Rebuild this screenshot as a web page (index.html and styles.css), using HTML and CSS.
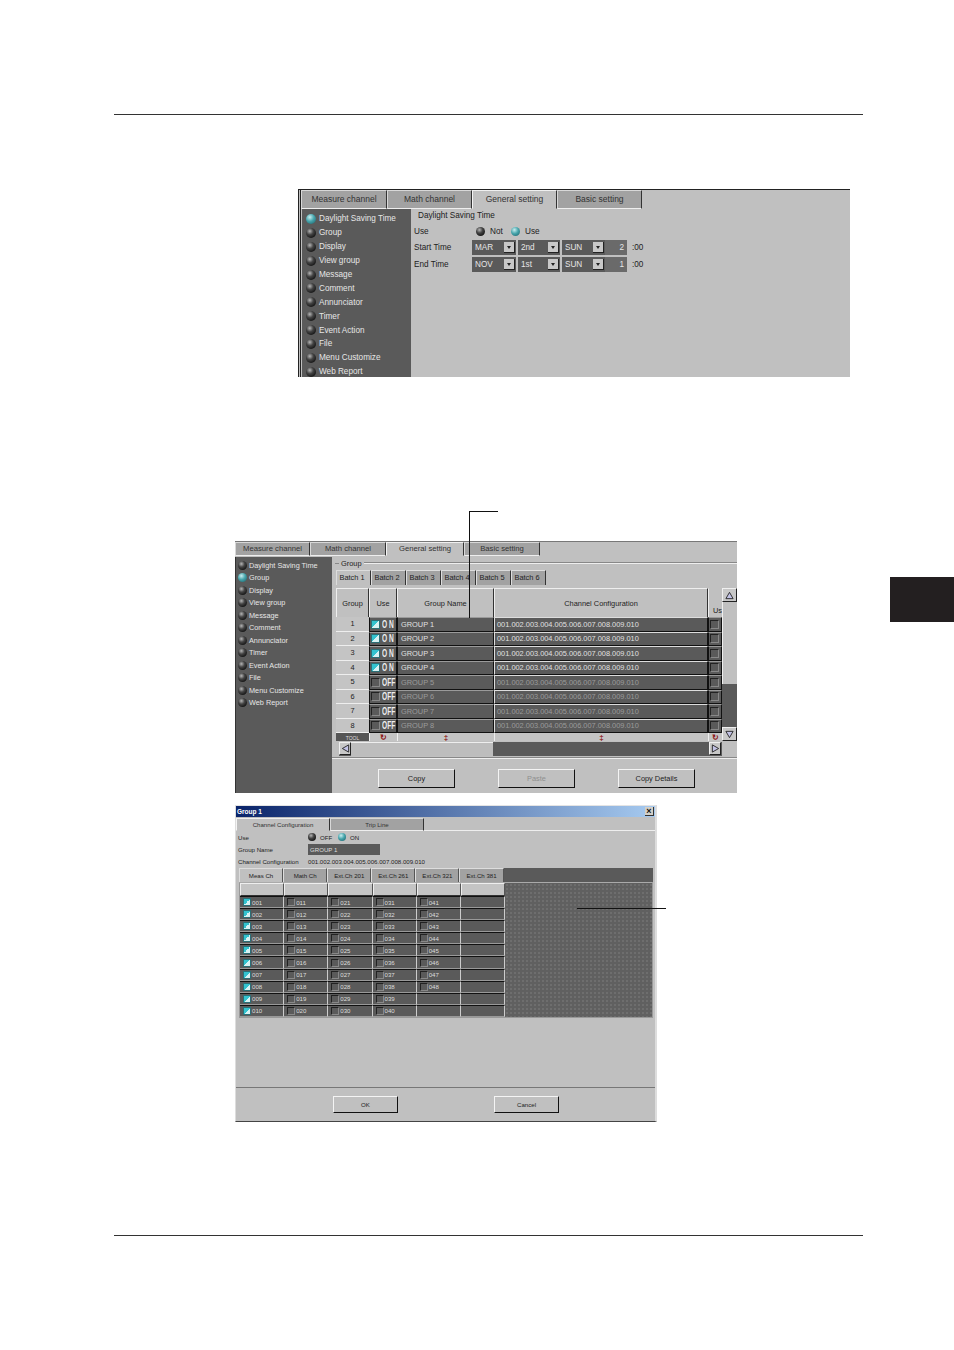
FILE: index.html
```html
<!DOCTYPE html>
<html lang="en">
<head>
<meta charset="utf-8">
<title>Group settings</title>
<link rel="stylesheet" href="styles.css">
</head>
<body>
<div class="page">
  <div class="rule"></div>

  <section class="fig1">
    <div class="tabs tabs-a">
      <div class="tab">Measure channel</div><div class="tab">Math channel</div><div class="tab active">General setting</div><div class="tab">Basic setting</div>
    </div>
    <div class="split">
      <ul class="side side-a">
        <li><i class="radio on"></i>Daylight Saving Time</li>
        <li><i class="radio"></i>Group</li>
        <li><i class="radio"></i>Display</li>
        <li><i class="radio"></i>View group</li>
        <li><i class="radio"></i>Message</li>
        <li><i class="radio"></i>Comment</li>
        <li><i class="radio"></i>Annunciator</li>
        <li><i class="radio"></i>Timer</li>
        <li><i class="radio"></i>Event Action</li>
        <li><i class="radio"></i>File</li>
        <li><i class="radio"></i>Menu Customize</li>
        <li><i class="radio"></i>Web Report</li>
      </ul>
      <div class="dst">
        <div class="dst-title">Daylight Saving Time</div>
        <div class="dst-row dst-use"><span class="dst-label">Use</span><i class="radio"></i><span class="opt">Not</span><i class="radio on"></i><span class="opt">Use</span></div>
        <div class="dst-row"><span class="dst-label">Start Time</span><span class="combo">MAR<b></b></span><span class="combo">2nd<b></b></span><span class="combo">SUN<b></b></span><span class="num">2</span><span class="zero">:00</span></div>
        <div class="dst-row"><span class="dst-label">End Time</span><span class="combo">NOV<b></b></span><span class="combo">1st<b></b></span><span class="combo">SUN<b></b></span><span class="num">1</span><span class="zero">:00</span></div>
      </div>
    </div>
  </section>

  <section class="fig2">
    <div class="tabs tabs-b">
      <div class="tab">Measure channel</div><div class="tab">Math channel</div><div class="tab active">General setting</div><div class="tab">Basic setting</div>
    </div>
    <div class="split">
      <ul class="side side-b">
        <li><i class="radio"></i>Daylight Saving Time</li>
        <li><i class="radio on"></i>Group</li>
        <li><i class="radio"></i>Display</li>
        <li><i class="radio"></i>View group</li>
        <li><i class="radio"></i>Message</li>
        <li><i class="radio"></i>Comment</li>
        <li><i class="radio"></i>Annunciator</li>
        <li><i class="radio"></i>Timer</li>
        <li><i class="radio"></i>Event Action</li>
        <li><i class="radio"></i>File</li>
        <li><i class="radio"></i>Menu Customize</li>
        <li><i class="radio"></i>Web Report</li>
      </ul>
      <div class="grp">
        <div class="legend"><span>Group</span></div>
        <div class="batches">
          <div class="batch active">Batch 1</div><div class="batch">Batch 2</div><div class="batch">Batch 3</div><div class="batch">Batch 4</div><div class="batch">Batch 5</div><div class="batch">Batch 6</div>
        </div>
        <div class="tablewrap">
          <div class="table">
            <div class="trow thead"><div>Group</div><div>Use</div><div>Group Name</div><div>Channel Configuration</div><div class="thead-use">Us</div></div>
            <div class="trow"><div class="idx">1</div><div class="use"><i class="check on"></i><b class="onoff on">O N</b></div><div class="name">GROUP 1</div><div class="cfg">001.002.003.004.005.006.007.008.009.010</div><div class="use"><i class="check"></i></div></div>
            <div class="trow"><div class="idx">2</div><div class="use"><i class="check on"></i><b class="onoff on">O N</b></div><div class="name">GROUP 2</div><div class="cfg">001.002.003.004.005.006.007.008.009.010</div><div class="use"><i class="check"></i></div></div>
            <div class="trow"><div class="idx">3</div><div class="use"><i class="check on"></i><b class="onoff on">O N</b></div><div class="name">GROUP 3</div><div class="cfg">001.002.003.004.005.006.007.008.009.010</div><div class="use"><i class="check"></i></div></div>
            <div class="trow"><div class="idx">4</div><div class="use"><i class="check on"></i><b class="onoff on">O N</b></div><div class="name">GROUP 4</div><div class="cfg">001.002.003.004.005.006.007.008.009.010</div><div class="use"><i class="check"></i></div></div>
            <div class="trow off"><div class="idx">5</div><div class="use"><i class="check"></i><b class="onoff">OFF</b></div><div class="name">GROUP 5</div><div class="cfg">001.002.003.004.005.006.007.008.009.010</div><div class="use"><i class="check"></i></div></div>
            <div class="trow off"><div class="idx">6</div><div class="use"><i class="check"></i><b class="onoff">OFF</b></div><div class="name">GROUP 6</div><div class="cfg">001.002.003.004.005.006.007.008.009.010</div><div class="use"><i class="check"></i></div></div>
            <div class="trow off"><div class="idx">7</div><div class="use"><i class="check"></i><b class="onoff">OFF</b></div><div class="name">GROUP 7</div><div class="cfg">001.002.003.004.005.006.007.008.009.010</div><div class="use"><i class="check"></i></div></div>
            <div class="trow off"><div class="idx">8</div><div class="use"><i class="check"></i><b class="onoff">OFF</b></div><div class="name">GROUP 8</div><div class="cfg">001.002.003.004.005.006.007.008.009.010</div><div class="use"><i class="check"></i></div></div>
            <div class="trow ttool"><div class="tool">TOOL</div><div class="red">&#8635;</div><div class="red">&#8225;</div><div class="red">&#8225;</div><div class="red">&#8635;</div></div>
          </div>
          <div class="vscroll">
            <div class="sbtn"><svg viewBox="0 0 10 10" class="arrow"><path d="M5 1.5 9 8.5H1Z"/></svg></div>
            <div class="vthumb"></div>
            <div class="vtrack"></div>
            <div class="sbtn"><svg viewBox="0 0 10 10" class="arrow"><path d="M5 8.5 1 1.5H9Z"/></svg></div>
          </div>
        </div>
        <div class="hscroll">
          <div class="sbtn"><svg viewBox="0 0 10 10" class="arrow"><path d="M1.5 5 8.5 1V9Z"/></svg></div>
          <div class="hthumb"></div>
          <div class="htrack"></div>
          <div class="sbtn"><svg viewBox="0 0 10 10" class="arrow"><path d="M8.5 5 1.5 1V9Z"/></svg></div>
        </div>
        <div class="btnbar">
          <div class="btn">Copy</div><div class="btn dim">Paste</div><div class="btn">Copy Details</div>
        </div>
      </div>
    </div>
  </section>

  <section class="fig3">
    <div class="titlebar"><span>Group 1</span><div class="close">&#215;</div></div>
    <div class="tabs tabs-c">
      <div class="tab active">Channel Configuration</div><div class="tab">Trip Line</div>
    </div>
    <div class="fields">
      <div class="field"><span class="flabel">Use</span><i class="radio"></i><span class="fopt">OFF</span><i class="radio on"></i><span class="fopt">ON</span></div>
      <div class="field"><span class="flabel">Group Name</span><span class="finput">GROUP 1</span></div>
      <div class="field"><span class="flabel">Channel Configuration</span><span>001.002.003.004.005.006.007.008.009.010</span></div>
    </div>
    <div class="ctabs">
      <div class="ctab active">Meas Ch</div><div class="ctab">Math Ch</div><div class="ctab">Ext.Ch 201</div><div class="ctab">Ext.Ch 261</div><div class="ctab">Ext.Ch 321</div><div class="ctab">Ext.Ch 381</div>
    </div>
    <div class="panel">
      <div class="chgrid">
        <div class="chead"></div><div class="chead"></div><div class="chead"></div><div class="chead"></div><div class="chead"></div><div class="chead"></div>
        <div class="ch"><i class="check on"></i>001</div><div class="ch"><i class="check"></i>011</div><div class="ch"><i class="check"></i>021</div><div class="ch"><i class="check"></i>031</div><div class="ch"><i class="check"></i>041</div><div class="ch"></div>
        <div class="ch"><i class="check on"></i>002</div><div class="ch"><i class="check"></i>012</div><div class="ch"><i class="check"></i>022</div><div class="ch"><i class="check"></i>032</div><div class="ch"><i class="check"></i>042</div><div class="ch"></div>
        <div class="ch"><i class="check on"></i>003</div><div class="ch"><i class="check"></i>013</div><div class="ch"><i class="check"></i>023</div><div class="ch"><i class="check"></i>033</div><div class="ch"><i class="check"></i>043</div><div class="ch"></div>
        <div class="ch"><i class="check on"></i>004</div><div class="ch"><i class="check"></i>014</div><div class="ch"><i class="check"></i>024</div><div class="ch"><i class="check"></i>034</div><div class="ch"><i class="check"></i>044</div><div class="ch"></div>
        <div class="ch"><i class="check on"></i>005</div><div class="ch"><i class="check"></i>015</div><div class="ch"><i class="check"></i>025</div><div class="ch"><i class="check"></i>035</div><div class="ch"><i class="check"></i>045</div><div class="ch"></div>
        <div class="ch"><i class="check on"></i>006</div><div class="ch"><i class="check"></i>016</div><div class="ch"><i class="check"></i>026</div><div class="ch"><i class="check"></i>036</div><div class="ch"><i class="check"></i>046</div><div class="ch"></div>
        <div class="ch"><i class="check on"></i>007</div><div class="ch"><i class="check"></i>017</div><div class="ch"><i class="check"></i>027</div><div class="ch"><i class="check"></i>037</div><div class="ch"><i class="check"></i>047</div><div class="ch"></div>
        <div class="ch"><i class="check on"></i>008</div><div class="ch"><i class="check"></i>018</div><div class="ch"><i class="check"></i>028</div><div class="ch"><i class="check"></i>038</div><div class="ch"><i class="check"></i>048</div><div class="ch"></div>
        <div class="ch"><i class="check on"></i>009</div><div class="ch"><i class="check"></i>019</div><div class="ch"><i class="check"></i>029</div><div class="ch"><i class="check"></i>039</div><div class="ch"></div><div class="ch"></div>
        <div class="ch"><i class="check on"></i>010</div><div class="ch"><i class="check"></i>020</div><div class="ch"><i class="check"></i>030</div><div class="ch"><i class="check"></i>040</div><div class="ch"></div><div class="ch"></div>
      </div>
      <div class="dots"></div>
    </div>
    <div class="dlgbar"><div class="btn small">OK</div><div class="btn small">Cancel</div></div>
  </section>

  <div class="rule rule-bottom"></div>

  <div class="callout c1-h"></div>
  <div class="callout c1-v"></div>
  <div class="callout c2-h"></div>
  <div class="thumb-tab"></div>
</div>
</body>
</html>
```

FILE: styles.css
```css
* { box-sizing: border-box; }
html, body { margin: 0; background: #fff; }
.page {
  position: relative;
  width: 954px;
  height: 1350px;
  padding-top: 114px;
  overflow: hidden;
  font-family: "Liberation Sans", Arial, sans-serif;
  color: #222;
}
.rule { height: 1px; margin: 0 91px 0 114px; background: #333; }
.rule-bottom { margin-top: 113px; }

/* shared */
.tabs { display: flex; background: #c0c0c0; }
.tab {
  display: flex; align-items: center; justify-content: center;
  padding-bottom: 1px;
  background: #a2a2a2;
  border-top: 1px solid #d8d8d8;
  border-left: 1px solid #d8d8d8;
  border-right: 1px solid #333;
  border-bottom: 1px solid #eee;
  color: #333;
}
.tab.active { background: #c0c0c0; border-bottom-color: #c0c0c0; border-top-color: #f0f0f0; border-left-color: #f4f4f4; }
.split { display: flex; }
.side { list-style: none; margin: 0; background: #5a5a5a; color: #e6e6e6; display: grid; }
.side li { display: flex; align-items: center; white-space: nowrap; }
.radio {
  display: block; flex: none; border-radius: 50%;
  width: 10px; height: 10px;
  background: radial-gradient(circle at 38% 32%, #b5b5b5 0, #444 38%, #0c0c0c 85%);
}
.radio.on { background: radial-gradient(circle at 38% 32%, #c9eef0 0, #47a5ac 45%, #1f6a72 90%); }

/* figure 1 */
.fig1 {
  width: 552px; height: 188px;
  margin: 74px 0 0 298px;
  background: #c0c0c0;
  border-top: 1px solid #222;
  border-left: 3px double #222;
  font-size: 8.2px;
  overflow: hidden;
}
.tabs-a { height: 19px; font-size: 8.5px; }
.tabs-a .tab { width: 85px; }
.tabs-a .tab:first-child { width: 86px; }
.side-a {
  width: 109px; height: 168px; flex: none;
  padding: 3px 0 0 4px;
  margin-left: 1px;
  grid-auto-rows: 13.9px;
}
.side-a .radio { margin-right: 3px; }
.dst { flex: 1; padding-left: 3px; }
.dst-title { height: 14px; margin-left: 4px; line-height: 14px; }
.dst-row { display: flex; align-items: center; margin-top: 2px; height: 15px; }
.dst-use { height: 14px; margin-top: 1px; }
.dst-label { width: 58px; flex: none; }
.dst-use .radio { width: 9px; height: 9px; margin: 0 5px 0 4px; }
.dst-use .opt { width: 20px; }
.dst-use .opt + .radio { margin-left: 1px; }
.combo {
  position: relative; width: 44px; height: 15px; flex: none;
  margin-right: 2px; padding-left: 3px; line-height: 15px;
  background: #5a5a5a; color: #e6e6e6;
}
.combo:nth-child(3) { width: 42px; }
.combo:nth-child(4) { width: 43px; margin-right: 0; }
.combo b {
  position: absolute; right: 1px; top: 2px; width: 11px; height: 11px;
  background: #c8c8c8;
  border-right: 1px solid #222; border-bottom: 1px solid #222;
}
.combo b::after {
  content: ""; position: absolute; left: 3px; top: 4px;
  border: 2px solid transparent; border-top: 3px solid #222; border-bottom: 0;
}
.num { width: 22px; height: 15px; padding-right: 3px; background: #6a6a6a; color: #e6e6e6; text-align: right; line-height: 15px; }
.zero { margin-left: 5px; }

/* figure 2 */
.fig2 {
  width: 502px; height: 252px;
  margin: 164px 0 0 235px;
  background: #c0c0c0;
  font-size: 7.4px;
  overflow: hidden;
}
.tabs-b { height: 15px; border-top: 1px solid #777; font-size: 7.7px; }
.tabs-b .tab { width: 76px; }
.tabs-b .tab:first-child { width: 75px; }
.tabs-b .tab:nth-child(3) { width: 78px; }
.side-b {
  width: 97px; height: 237px; flex: none;
  padding: 2px 0 0 2px;
  font-size: 7.3px;
  grid-auto-rows: 12.5px;
  align-content: start;
  border-left: 1px solid #333;
  margin-top: 1px;
}
.side-b .radio { width: 9px; height: 9px; margin-right: 2px; }
.grp { flex: 1; padding-left: 4px; min-width: 0; }
.legend { height: 14px; display: flex; align-items: center; margin-left: -1px; }
.legend::before { content: ""; width: 4px; height: 1px; background: #888; }
.legend::after { content: ""; flex: 1; height: 1px; background: #eee; box-shadow: 0 -1px 0 #888; }
.legend span { padding: 0 2px; }
.batches { display: flex; height: 15px; }
.batch {
  width: 35px; display: flex; align-items: center;
  padding: 0 0 1px 2.5px;
  background: #a2a2a2; border-top: 1px solid #ddd; border-left: 1px solid #ddd; border-right: 1px solid #333;
}
.batch.active { background: #c0c0c0; }
.tablewrap { display: flex; margin-top: 3px; height: 153px; }
.table {
  width: 386px; flex: none; display: grid; overflow: hidden;
  grid-template-rows: 29px repeat(8, 14.5px) 8px;
  background: #111;
}
.trow { display: grid; grid-template-columns: 33px 28px 97px 214px 14px; min-height: 0; }
.trow > div { min-width: 0; white-space: nowrap; }
.thead > div {
  display: flex; align-items: center; justify-content: center;
  background: #c0c0c0; border-top: 1px solid #eee; border-left: 1px solid #eee; border-right: 1px solid #333;
}
.thead .thead-use { padding: 14px 0 0 4px; border-right: 0; border-top-color: #c0c0c0; justify-content: flex-start; }
.idx {
  display: flex; align-items: center; justify-content: center;
  background: #c4c4c4; border-bottom: 1px solid #eee;
}
.use, .name, .cfg {
  display: flex; align-items: center;
  background: #5a5a5a; color: #e0e0e0;
  border: 1px solid #111; border-top-color: #9a9a9a;
}
.name, .cfg { padding-left: 3px; }
.cfg { border-left-color: #ddd; border-top-color: #ddd; padding-left: 2px; }
.off .name, .off .cfg { color: #9b9b9b; }
.use { padding-left: 1px; gap: 2px; }
.check {
  display: block; flex: none; width: 9px; height: 9px;
  border-top: 1px solid #222; border-left: 1px solid #222; border-right: 1px solid #888; border-bottom: 1px solid #888;
}
.check.on {
  background: linear-gradient(135deg, #33c3cf 0 50%, #d8f2f3 50% 100%);
  border-color: #2b6f76;
}
.onoff { font-size: 10px; line-height: 1; padding-top: 1px; color: #eee; transform: scaleX(.66); transform-origin: left center; white-space: nowrap; margin-right: -7px; }
.ttool > div {
  display: flex; align-items: center; justify-content: center;
  background: #c4c4c4; border-left: 1px solid #eee;
}
.ttool .tool { background: #555; color: #ddd; font-size: 5px; border: 0; }
.red { color: #8c1515; font-size: 8px; font-weight: 700; }
.vscroll { width: 15px; flex: none; display: flex; flex-direction: column; background: #5a5a5a; }
.sbtn {
  display: flex; align-items: center; justify-content: center;
  flex: none; width: 12px; height: 13px;
  background: #c8c8c8;
  border-top: 1px solid #f0f0f0; border-left: 1px solid #f0f0f0; border-right: 1px solid #222; border-bottom: 1px solid #222;
}
.vscroll .sbtn { width: 15px; height: 14px; }
.arrow { width: 9px; height: 9px; display: block; }
.arrow path { fill: #c3c3e6; stroke: #222; stroke-width: 1; }
.vthumb { height: 82px; background: #c0c0c0; border-left: 1px solid #eee; flex: none; }
.vtrack { flex: 1; }
.hscroll { display: flex; height: 14px; margin: 1px 15px 0 3px; background: #5a5a5a; padding-right: 1px; }
.hthumb { width: 142px; background: #bdbdbd; border-top: 1px solid #eee; }
.htrack { flex: 1; }
.btnbar {
  display: flex; gap: 43px; height: 37px;
  margin: 1px 0 0 -4px; padding: 11px 0 0 46px;
  border-top: 1px solid #888;
  box-shadow: inset 0 1px 0 #eee;
}
.btn {
  width: 77px; height: 19px;
  display: flex; align-items: center; justify-content: center;
  padding-bottom: 1px;
  background: #c0c0c0;
  border-top: 1px solid #f4f4f4; border-left: 1px solid #f4f4f4; border-right: 1px solid #111; border-bottom: 1px solid #111;
}
.btn.dim { color: #8f8f8f; }

/* figure 3 */
.fig3 {
  width: 422px; height: 317px;
  margin: 12px 0 0 235px;
  background: #c0c0c0;
  border-left: 1px solid #ddd;
  border-right: 2px solid #ddd;
  border-bottom: 1px solid #444;
  border-top: 1px solid #e4e4e4;
  font-size: 6.1px;
  overflow: hidden;
}
.titlebar {
  height: 11px; display: flex; align-items: center; justify-content: space-between;
  background: linear-gradient(90deg, #0a246a, #a6caf0);
  color: #fff; font: 700 6.5px "Liberation Sans", Arial, sans-serif;
  padding: 0 1px;
}
.close {
  width: 9px; height: 9px; display: flex; align-items: center; justify-content: center;
  background: #d4d0c8; color: #111; font-size: 9px; line-height: 1; border-right: 1px solid #333; border-bottom: 1px solid #333;
}
.tabs-c { height: 13px; margin-top: 1px; border-bottom: 1px solid #eee; }
.tabs-c .tab { width: 94px; height: 13px; }
.fields { padding: 0 0 0 2px; }
.field { display: flex; align-items: center; height: 12px; white-space: nowrap; }
.flabel { width: 70px; flex: none; }
.field .radio { width: 8px; height: 8px; margin: 0 4px 0 0; }
.fopt { width: 18px; }
.fopt:last-child { width: auto; }
.finput { width: 72px; height: 11px; padding-left: 2px; line-height: 11px; background: #5a5a5a; color: #ddd; }
.ctabs { display: flex; height: 14px; margin: 1px 2px 0 3px; background: #5a5a5a; }
.ctab {
  width: 44.1px; display: flex; align-items: center; justify-content: center;
  padding-bottom: 1px;
  background: #a2a2a2; border-top: 1px solid #ddd; border-left: 1px solid #ddd; border-right: 1px solid #555;
}
.ctab.active { background: #c0c0c0; }
.panel {
  display: flex; height: 136px;
  margin: 0 2px 0 3px;
  border: 1px solid #999; border-top: 1px solid #aaa;
}
.chgrid {
  width: 265px; flex: none;
  display: grid;
  grid-template-columns: repeat(6, 1fr);
  grid-template-rows: 13px repeat(10, 12.1px);
}
.chead { background: #c4c4c4; border-left: 1px solid #eee; border-top: 1px solid #eee; border-right: 1px solid #555; border-bottom: 1px solid #333; }
.ch {
  display: flex; align-items: center; gap: 1px; padding-left: 3px;
  background: #5a5a5a; color: #ddd;
  border-top: 1px solid #111; border-bottom: 1px solid #999; border-right: 1px solid #ccc;
}
.ch .check { width: 8px; height: 8px; }
.dots {
  flex: 1;
  background-color: #606060;
  background-image: radial-gradient(circle, #6f6f6f 0.7px, transparent 0.9px);
  background-size: 4px 4px;
}
.dlgbar {
  display: flex; gap: 96px;
  margin-top: 69px; height: 34px;
  padding: 8px 0 0 97px;
  border-top: 1px solid #777;
}
.btn.small { width: 65px; height: 17px; }

/* overlays */
.callout { position: absolute; background: #111; }
.c1-h { left: 469px; top: 511px; width: 29px; height: 1px; }
.c1-v { left: 469px; top: 511px; width: 1px; height: 107px; }
.c2-h { left: 577px; top: 908px; width: 89px; height: 1px; }
.thumb-tab { position: absolute; left: 890px; top: 577px; width: 64px; height: 45px; background: #231f20; }
```
